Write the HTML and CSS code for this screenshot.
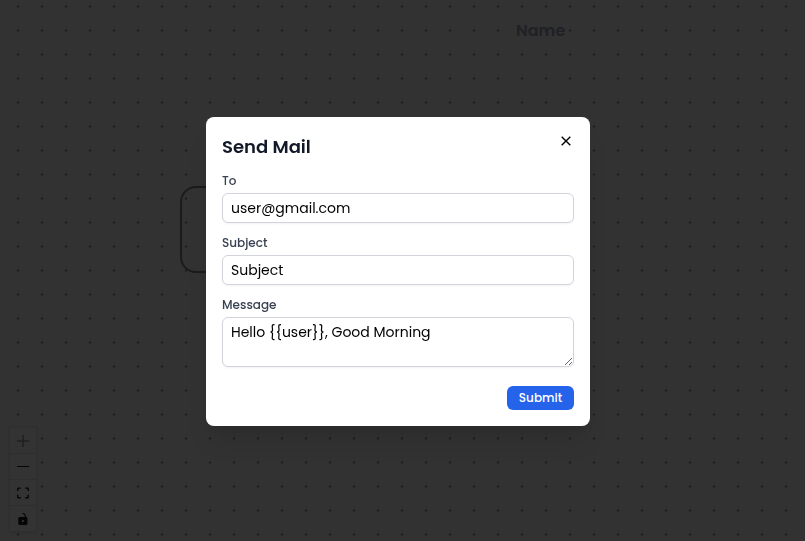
FILE: index.html
```html
<!DOCTYPE html>
<html lang="en">
<head>
<meta charset="utf-8">
<title>Send Mail</title>
<link rel="stylesheet" href="styles.css">
</head>
<body>
<div class="canvas">
  <div class="node"></div>
  <span class="node-name">Name</span>
  <div class="controls">
    <button class="control muted" aria-label="Zoom in"><svg viewBox="0 0 32 32" width="12" height="12"><path d="M18.133 13.867V0h-4.266v13.867H0v4.266h13.867V32h4.266V18.133H32v-4.266z"/></svg></button>
    <button class="control" aria-label="Zoom out"><svg viewBox="0 0 12 1" width="12" height="1"><path d="M0 0h12v1H0z"/></svg></button>
    <button class="control" aria-label="Fit view"><svg viewBox="0 0 32 30" width="12" height="12"><path d="M3.692 4.63c0-.53.4-.938.939-.938h5.215V0H4.708C2.13 0 0 2.054 0 4.63v5.216h3.692V4.631zM27.354 0h-5.2v3.692h5.17c.53 0 .984.4.984.939v5.215H32V4.631A4.624 4.624 0 0027.354 0zm.954 24.83c0 .532-.4.94-.939.94h-5.215v3.768h5.215c2.577 0 4.631-2.13 4.631-4.707v-5.139h-3.692v5.139zm-23.677.94c-.531 0-.939-.4-.939-.94v-5.138H0v5.139c0 2.577 2.13 4.707 4.708 4.707h5.138V25.77H4.631z"/></svg></button>
    <button class="control" aria-label="Toggle interactivity"><svg viewBox="0 0 25 32" width="12" height="12"><path d="M21.333 10.667H19.81V7.619C19.81 3.429 16.38 0 12.19 0c-4.114 1.828-1.37 2.133.305 2.438 1.676.305 4.42 2.59 4.42 5.181v3.048H3.047A3.056 3.056 0 000 13.714v15.238A3.056 3.056 0 003.048 32h18.285a3.056 3.056 0 003.048-3.048V13.714a3.056 3.056 0 00-3.048-3.047zM12.19 24.533a3.056 3.056 0 01-3.047-3.047 3.056 3.056 0 013.047-3.048 3.056 3.056 0 013.048 3.048 3.056 3.056 0 01-3.048 3.047z"/></svg></button>
  </div>
</div>
<div class="overlay">
  <form class="modal">
    <header class="modal-head">
      <h2>Send Mail</h2>
      <button type="button" class="close" aria-label="Close"><svg viewBox="0 0 10 10" width="10" height="10"><path d="M.7.7l8.6 8.6M9.3.7L.7 9.3"/></svg></button>
    </header>
    <label class="field"><span class="label">To</span><input value="user@gmail.com"></label>
    <label class="field"><span class="label">Subject</span><input value="Subject"></label>
    <label class="field"><span class="label">Message</span><textarea spellcheck="false">Hello {{user}}, Good Morning</textarea></label>
    <footer class="actions"><button type="button" class="submit">Submit</button></footer>
  </form>
</div>
</body>
</html>
```
FILE: styles.css
```css
* { box-sizing: border-box; }
body {
  margin: 0;
  font-family: Poppins, Inter, sans-serif;
  overflow: hidden;
}
button, input, textarea { font: inherit; margin: 0; }
.canvas {
  position: relative;
  height: 541px;
  background: #323232 radial-gradient(circle at 12px 12px, #1c1c1c 0.8px, transparent 1.4px) 6px -5.5px / 24px 24px;
}
.node {
  position: absolute;
  left: 180px;
  top: 186px;
  width: 200px;
  height: 87px;
  border: 2px solid #1b1b1b;
  border-radius: 16px;
}
.node-name {
  position: absolute;
  left: 516px;
  top: 19px;
  font-size: 16px;
  line-height: 24px;
  font-weight: 600;
  color: #202124;
}
.controls {
  position: absolute;
  left: 10px;
  top: 428px;
  width: 26px;
  box-shadow: 0 0 2px 1px rgba(0, 0, 0, 0.08);
}
.control {
  display: flex;
  align-items: center;
  justify-content: center;
  width: 26px;
  height: 26px;
  padding: 0;
  border: 0;
  border-bottom: 1px solid #2e2e2e;
  background: #333;
  fill: #050505;
}
.control.muted { fill: #202020; }
.overlay {
  position: fixed;
  inset: 0;
  display: flex;
  align-items: center;
  justify-content: center;
  padding: 2px 9px 0 0;
}
.modal {
  width: 384px;
  height: 309px;
  padding: 16px;
  border-radius: 8px;
  background: #fff;
  box-shadow: 0 20px 25px -5px rgba(0, 0, 0, 0.1), 0 8px 10px -6px rgba(0, 0, 0, 0.1);
}
.modal-head {
  display: flex;
  justify-content: space-between;
  height: 40px;
}
h2 {
  margin: 0;
  font-size: 18px;
  line-height: 28px;
  font-weight: 600;
  color: #111827;
}
.close {
  display: flex;
  align-items: center;
  justify-content: center;
  width: 16px;
  height: 16px;
  padding: 0;
  border: 0;
  background: none;
}
.close svg { fill: none; stroke: #000; stroke-width: 1.4; }
.field { display: block; margin-bottom: 12px; }
.label {
  display: block;
  height: 20px;
  font-size: 12px;
  line-height: 16px;
  font-weight: 500;
  color: #374151;
}
input, textarea {
  display: block;
  width: 352px;
  height: 30px;
  padding: 4px 8px;
  border: 1px solid #d1d5db;
  border-radius: 6px;
  outline: 0;
  background: #fff;
  font-size: 14px;
  line-height: 20px;
  color: #000;
  box-shadow: 0 1px 2px rgba(0, 0, 0, 0.05);
}
textarea { height: 50px; resize: both; overflow: auto; }
.actions {
  display: flex;
  justify-content: flex-end;
  padding-top: 7px;
}
.submit {
  width: 67px;
  height: 24px;
  padding: 0;
  border: 0;
  border-radius: 6px;
  background: #2563eb;
  font-size: 12px;
  line-height: 16px;
  font-weight: 500;
  color: #fff;
}
```
